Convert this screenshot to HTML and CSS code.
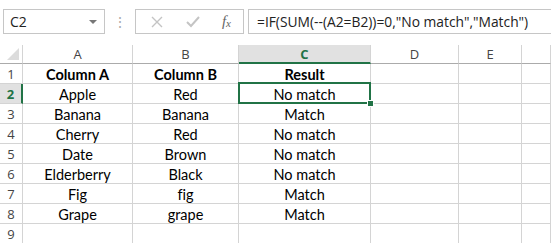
FILE: index.html
```html
<!DOCTYPE html>
<html lang="en">
<head>
  <meta charset="UTF-8" />
  <title>Sheet</title>
  <link rel="stylesheet" href="styles.css">
</head>
<body>
  <div class="formula-bar">
    <div class="name-box">
      <span>C2</span>
      <span class="caret"></span>
    </div>
    <div class="grip">&#8942;</div>
    <div class="fx-box">
      <svg class="icon" width="14" height="14" viewBox="0 0 14 14">
        <path d="M2 2 L12 12 M12 2 L2 12" stroke="#c4c4c4" stroke-width="1.4" fill="none"/>
      </svg>
      <svg class="icon" width="16" height="14" viewBox="0 0 16 14">
        <path d="M2 7 L6 11 L14 2" stroke="#c4c4c4" stroke-width="2" fill="none"/>
      </svg>
      <span class="fx">f<sub>x</sub></span>
    </div>
    <div class="formula">=IF(SUM(--(A2=B2))=0,"No match","Match")</div>
  </div>

  <div class="sheet">
    <div class="corner"><span class="tri"></span></div>
    <div class="col-head">A</div>
    <div class="col-head">B</div>
    <div class="col-head active">C</div>
    <div class="col-head">D</div>
    <div class="col-head">E</div>
    <div class="col-head last"></div>

    <div class="row-head">1</div>
    <div class="cell bold">Column A</div>
    <div class="cell bold">Column B</div>
    <div class="cell bold">Result</div>
    <div class="cell"></div><div class="cell"></div><div class="cell"></div>

    <div class="row-head active">2</div>
    <div class="cell">Apple</div>
    <div class="cell">Red</div>
    <div class="cell selected">No match</div>
    <div class="cell"></div><div class="cell"></div><div class="cell"></div>

    <div class="row-head">3</div>
    <div class="cell">Banana</div>
    <div class="cell">Banana</div>
    <div class="cell">Match</div>
    <div class="cell"></div><div class="cell"></div><div class="cell"></div>

    <div class="row-head">4</div>
    <div class="cell">Cherry</div>
    <div class="cell">Red</div>
    <div class="cell">No match</div>
    <div class="cell"></div><div class="cell"></div><div class="cell"></div>

    <div class="row-head">5</div>
    <div class="cell">Date</div>
    <div class="cell">Brown</div>
    <div class="cell">No match</div>
    <div class="cell"></div><div class="cell"></div><div class="cell"></div>

    <div class="row-head">6</div>
    <div class="cell">Elderberry</div>
    <div class="cell">Black</div>
    <div class="cell">No match</div>
    <div class="cell"></div><div class="cell"></div><div class="cell"></div>

    <div class="row-head">7</div>
    <div class="cell">Fig</div>
    <div class="cell">fig</div>
    <div class="cell">Match</div>
    <div class="cell"></div><div class="cell"></div><div class="cell"></div>

    <div class="row-head">8</div>
    <div class="cell">Grape</div>
    <div class="cell">grape</div>
    <div class="cell">Match</div>
    <div class="cell"></div><div class="cell"></div><div class="cell"></div>

    <div class="row-head">9</div>
    <div class="cell"></div><div class="cell"></div><div class="cell"></div>
    <div class="cell"></div><div class="cell"></div><div class="cell"></div>
  </div>
</body>
</html>
```

FILE: styles.css
```css
body {
  margin: 0;
  background-color: white;
  font-family: 'Lato', 'Liberation Sans', sans-serif;
  font-variant-ligatures: none;
  color: #000;
  overflow: hidden;
}
.formula-bar {
  display: flex;
  align-items: center;
  height: 45px;
  padding-left: 3px;
  box-sizing: border-box;
  padding-bottom: 2px;
}
.name-box {
  width: 102px;
  height: 25px;
  box-sizing: border-box;
  border: 1px solid #c6c6c6;
  display: flex;
  align-items: center;
  justify-content: space-between;
  padding: 0 6px 0 6px;
  font-family: 'Open Sans', sans-serif;
  font-size: 14px;
  color: #222;
}
.caret {
  width: 0;
  height: 0;
  border-left: 4px solid transparent;
  border-right: 4px solid transparent;
  border-top: 4px solid #777;
  margin-right: 1px;
}
.grip {
  width: 30px;
  text-align: center;
  color: #aaa;
  font-size: 14px;
}
.fx-box {
  width: 109px;
  height: 25px;
  box-sizing: border-box;
  border: 1px solid #c6c6c6;
  display: flex;
  align-items: center;
  justify-content: space-between;
  padding: 0 12px 0 14px;
}
.icon {
  display: block;
}
.fx {
  font-family: 'Liberation Serif', serif;
  font-style: italic;
  font-size: 15px;
  color: #666;
}
.fx sub {
  font-size: 11px;
  vertical-align: -1px;
}
.formula {
  flex: 1;
  margin-left: 4px;
  height: 25px;
  box-sizing: border-box;
  border: 1px solid #c6c6c6;
  border-right: none;
  display: flex;
  align-items: center;
  padding-left: 8px;
  font-family: 'Open Sans', sans-serif;
  font-size: 13.8px;
  color: #222;
  white-space: nowrap;
}
.sheet {
  display: grid;
  grid-template-columns: 23px 110px 106px 132px 88px 63px 1fr;
  grid-template-rows: 19px repeat(9, 20px);
}
.corner {
  border-right: 1px solid #d4d4d4;
  border-bottom: 1px solid #ababab;
  position: relative;
}
.tri {
  position: absolute;
  right: 3px;
  bottom: 3px;
  width: 0;
  height: 0;
  border-left: 12px solid transparent;
  border-bottom: 12px solid #dcdcdc;
}
.col-head {
  border-right: 1px solid #d4d4d4;
  border-bottom: 1px solid #ababab;
  display: flex;
  align-items: center;
  justify-content: center;
  font-family: 'Open Sans', sans-serif;
  font-size: 13px;
  color: #444;
}
.col-head.active {
  background-color: #e1e1e1;
  border-bottom: 2px solid #217346;
  color: #217346;
  font-weight: bold;
}
.row-head {
  border-right: 1px solid #d4d4d4;
  border-bottom: 1px solid #d4d4d4;
  display: flex;
  align-items: center;
  justify-content: center;
  font-family: 'Open Sans', sans-serif;
  font-size: 13px;
  color: #444;
}
.row-head.active {
  background-color: #e1e1e1;
  border-right: 2px solid #217346;
  color: #217346;
  font-weight: bold;
}
.cell {
  border-right: 1px solid #d4d4d4;
  border-bottom: 1px solid #d4d4d4;
  display: flex;
  align-items: center;
  justify-content: center;
  font-size: 14.5px;
  padding-top: 2px;
  box-sizing: border-box;
  white-space: nowrap;
}
.cell.bold {
  font-weight: bold;
}
.cell.selected {
  position: relative;
}
.cell.selected::after {
  content: '';
  position: absolute;
  top: -2px;
  left: -1px;
  right: -1px;
  bottom: -1px;
  border: 2px solid #217346;
}
.cell.selected::before {
  content: '';
  position: absolute;
  right: -4px;
  bottom: -4px;
  width: 5px;
  height: 5px;
  background-color: #217346;
  border: 1px solid white;
  z-index: 1;
}
```
